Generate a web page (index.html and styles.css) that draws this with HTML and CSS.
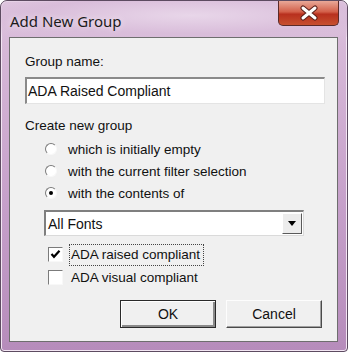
FILE: index.html
```html
<!DOCTYPE html>
<html lang="en">

<head>
    <meta charset="UTF-8">
    <meta name="viewport" content="width=device-width, initial-scale=1.0">
    <title>Add New Group</title>
    <link rel="stylesheet" href="styles.css">
</head>

<body>
    <div class="window">
        <div class="titlebar">
            <span class="title">Add New Group</span>
            <div class="close-btn">
                <svg width="22" height="16" viewBox="0 0 22 16">
                    <path d="M5 3 L17 13 M17 3 L5 13" stroke="#5a1f1a" stroke-width="5" stroke-linecap="round" />
                    <path d="M5 3 L17 13 M17 3 L5 13" stroke="#ffffff" stroke-width="3" stroke-linecap="round" />
                </svg>
            </div>
        </div>
        <div class="client">
            <div class="label first">Group name:</div>
            <div class="text-input">ADA Raised Compliant</div>

            <div class="label second">Create new group</div>
            <div class="radio-list">
                <div class="radio-row"><span class="radio"></span>which is initially empty</div>
                <div class="radio-row"><span class="radio"></span>with the current filter selection</div>
                <div class="radio-row"><span class="radio checked"></span>with the contents of</div>
            </div>

            <div class="select">
                <span class="select-text">All Fonts</span>
                <span class="select-btn"><span class="arrow"></span></span>
            </div>

            <div class="check-list">
                <div class="check-row">
                    <span class="checkbox">
                        <svg width="11" height="11" viewBox="0 0 11 11">
                            <path d="M1.5 5 L4 7.8 L9.5 1.8" stroke="#000" stroke-width="2.2" fill="none" />
                        </svg>
                    </span>
                    <span class="focus">ADA raised compliant</span>
                </div>
                <div class="check-row">
                    <span class="checkbox"></span>
                    <span class="check-text">ADA visual compliant</span>
                </div>
            </div>

            <div class="buttons">
                <div class="btn default">OK</div>
                <div class="btn">Cancel</div>
            </div>
        </div>
    </div>
</body>

</html>
```

FILE: styles.css
```css
body {
    margin: 0;
    background: #ffffff;
    font-family: "Liberation Sans", Arial, sans-serif;
    font-size: 13.5px;
    color: #111;
}

.window {
    width: 346px;
    height: 350px;
    border: 1px solid #5d4b61;
    border-radius: 7px 7px 4px 4px;
    background: linear-gradient(180deg, #e2cbe2 0%, #d7b9d8 12%, #c59fc9 60%, #b68cbb 100%);
    box-shadow: inset 0 0 0 1px #f3e6f3;
    display: flex;
    flex-direction: column;
}

.titlebar {
    height: 36px;
    display: flex;
    justify-content: space-between;
    align-items: flex-start;
    background: radial-gradient(ellipse at 55% 40%, #e8d6e9 0%, #d9bdda 60%, transparent 100%);
    border-radius: 7px 7px 0 0;
}

.title {
    font-family: "Noto Sans", "Open Sans", sans-serif;
    font-size: 15px;
    color: #1b1b1b;
    margin: 10px 0 0 9px;
    text-shadow: 0 0 6px #f6eef6;
}

.close-btn {
    width: 59px;
    height: 24px;
    margin-right: 8px;
    border: 1px solid #5b2a28;
    border-top: none;
    border-radius: 0 0 5px 5px;
    background: linear-gradient(180deg, #e9a898 0%, #d3604a 45%, #b8301e 55%, #c7502f 100%);
    display: flex;
    align-items: center;
    justify-content: center;
}

.client {
    margin-left: 8px;
    width: 329px;
    height: 305px;
    border: 1px solid #6e6e6e;
    background: #f0f0f0;
    padding: 0 15px 0 15px;
    box-sizing: border-box;
    display: flex;
    flex-direction: column;
}

.label {
    line-height: 16px;
}

.label.first {
    margin-top: 16px;
}

.label.second {
    margin-top: 14px;
}

.text-input {
    margin-top: 7px;
    width: 300px;
    height: 27px;
    box-sizing: border-box;
    background: #fff;
    border-top: 2px solid #8a8a8a;
    border-left: 2px solid #8a8a8a;
    border-bottom: 1px solid #e4e4e4;
    border-right: 1px solid #e4e4e4;
    padding-left: 1px;
    line-height: 24px;
    font-size: 14px;
}

.radio-list {
    margin-top: 4px;
    padding-left: 20px;
}

.radio-row {
    height: 22px;
    display: flex;
    align-items: center;
}

.radio {
    width: 12px;
    height: 12px;
    box-sizing: border-box;
    border-radius: 50%;
    border: 1px solid;
    border-color: #7b7b7b #f8f8f8 #f8f8f8 #7b7b7b;
    background: #fff;
    margin-right: 11px;
    display: flex;
    align-items: center;
    justify-content: center;
}

.radio.checked::after {
    content: "";
    width: 4px;
    height: 4px;
    border-radius: 50%;
    background: #000;
}

.select {
    margin-top: 6px;
    margin-left: 19px;
    width: 260px;
    height: 26px;
    box-sizing: border-box;
    background: #fff;
    border-top: 2px solid #7f7f7f;
    border-left: 2px solid #7f7f7f;
    border-bottom: 1px solid #dadada;
    border-right: 1px solid #dadada;
    display: flex;
    align-items: center;
    justify-content: space-between;
}

.select-text {
    padding-left: 2px;
    font-size: 14px;
}

.select-btn {
    width: 20px;
    height: 21px;
    box-sizing: border-box;
    background: #ececec;
    border: 1px solid;
    border-color: #fff #5a5a5a #5a5a5a #fff;
    margin-right: 1px;
    display: flex;
    align-items: center;
    justify-content: center;
}

.arrow {
    width: 0;
    height: 0;
    border-left: 4px solid transparent;
    border-right: 4px solid transparent;
    border-top: 5px solid #000;
}

.check-list {
    margin-top: 7px;
    padding-left: 23px;
}

.check-row {
    height: 23px;
    display: flex;
    align-items: center;
}

.checkbox {
    width: 15px;
    height: 15px;
    box-sizing: border-box;
    background: #fff;
    border: 1px solid;
    border-color: #7b7b7b #f8f8f8 #f8f8f8 #7b7b7b;
    margin-right: 6px;
    display: flex;
    align-items: center;
    justify-content: center;
}

.focus {
    border: 1px dotted #444;
    padding: 2px 0 3px 1px;
    width: 132px;
}

.check-text {
    padding-left: 2px;
}

.buttons {
    margin-top: 11px;
    display: flex;
    justify-content: flex-end;
    gap: 10px;
}

.btn {
    width: 96px;
    height: 28px;
    box-sizing: border-box;
    border: 1px solid;
    border-color: #fdfdfd #4a4a4a #4a4a4a #fdfdfd;
    box-shadow: inset -1px -1px 0 #a0a0a0;
    background: #f0f0f0;
    display: flex;
    align-items: center;
    justify-content: center;
    font-size: 14px;
}

.btn.default {
    border: 1px solid #2a2a2a;
    box-shadow: inset 1px 1px 0 #fff, inset -2px -2px 0 #8a8a8a;
}
```
